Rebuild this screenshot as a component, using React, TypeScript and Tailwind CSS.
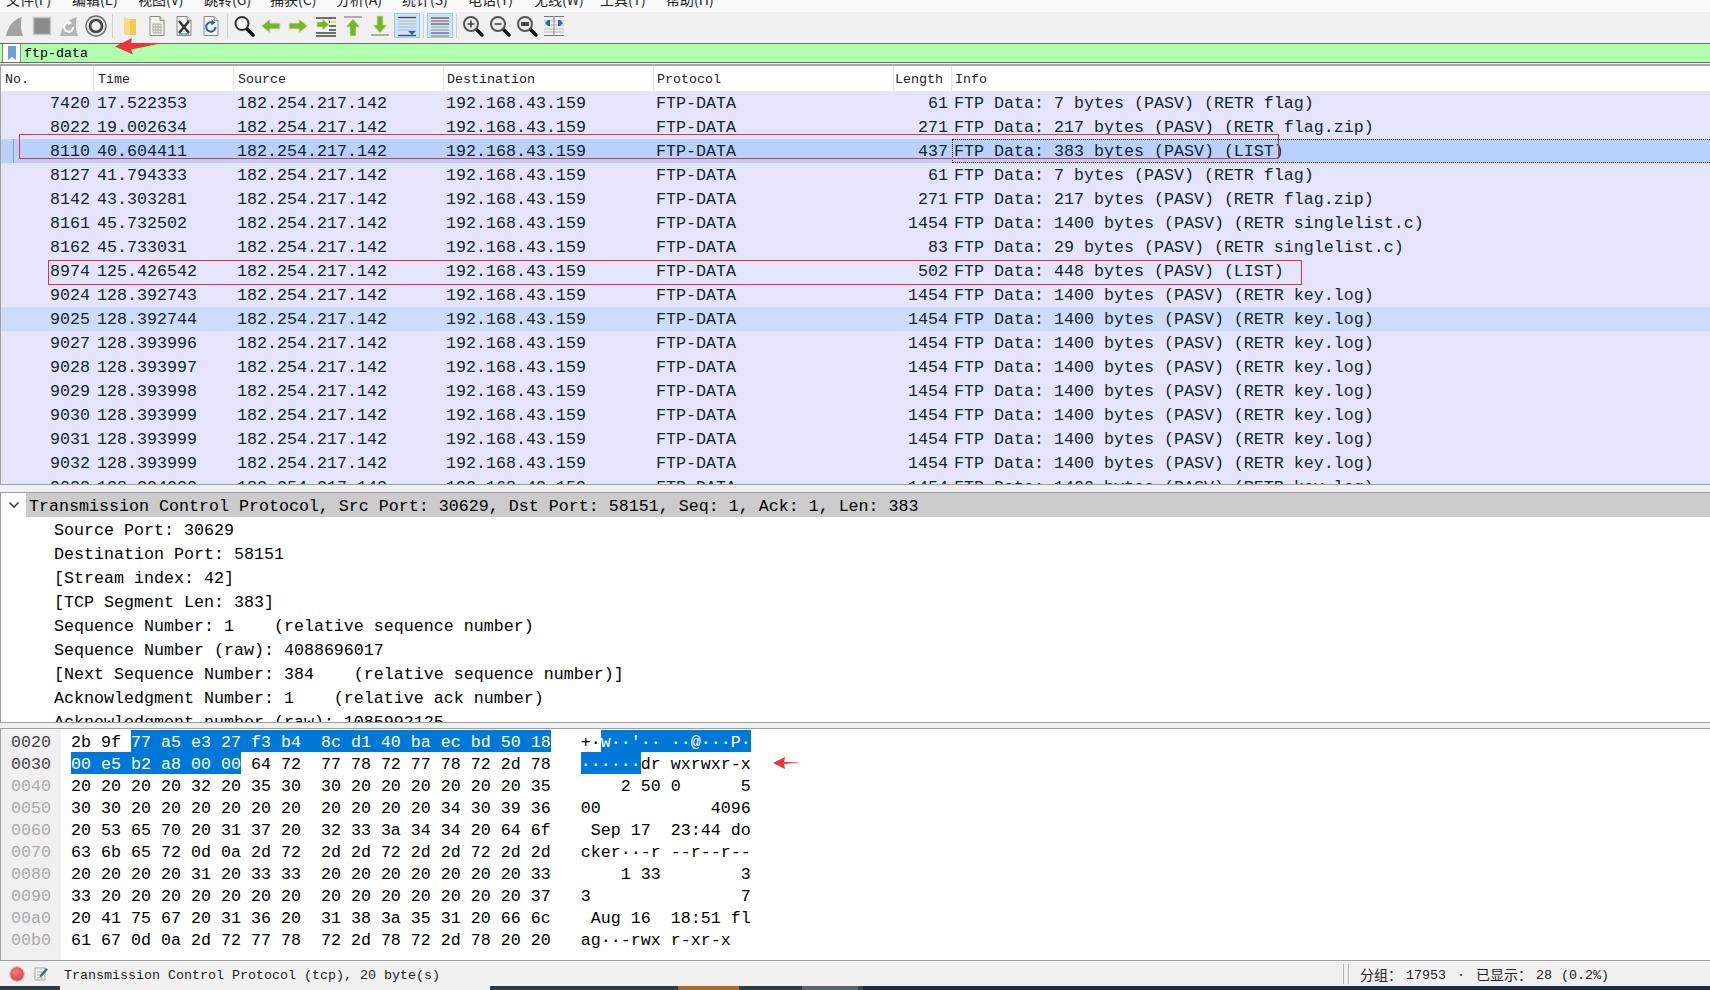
const mono = "font-['Liberation_Mono','Noto_Sans_CJK_SC',monospace]";

const menus = ["文件(F)", "编辑(E)", "视图(V)", "跳转(G)", "捕获(C)", "分析(A)", "统计(S)", "电话(Y)", "无线(W)", "工具(T)", "帮助(H)"];

type Pkt = [string, string, string, string];

const packets: Pkt[] = [
  ["7420", "17.522353", "61", "FTP Data: 7 bytes (PASV) (RETR flag)"],
  ["8022", "19.002634", "271", "FTP Data: 217 bytes (PASV) (RETR flag.zip)"],
  ["8110", "40.604411", "437", "FTP Data: 383 bytes (PASV) (LIST)"],
  ["8127", "41.794333", "61", "FTP Data: 7 bytes (PASV) (RETR flag)"],
  ["8142", "43.303281", "271", "FTP Data: 217 bytes (PASV) (RETR flag.zip)"],
  ["8161", "45.732502", "1454", "FTP Data: 1400 bytes (PASV) (RETR singlelist.c)"],
  ["8162", "45.733031", "83", "FTP Data: 29 bytes (PASV) (RETR singlelist.c)"],
  ["8974", "125.426542", "502", "FTP Data: 448 bytes (PASV) (LIST)"],
  ["9024", "128.392743", "1454", "FTP Data: 1400 bytes (PASV) (RETR key.log)"],
  ["9025", "128.392744", "1454", "FTP Data: 1400 bytes (PASV) (RETR key.log)"],
  ["9027", "128.393996", "1454", "FTP Data: 1400 bytes (PASV) (RETR key.log)"],
  ["9028", "128.393997", "1454", "FTP Data: 1400 bytes (PASV) (RETR key.log)"],
  ["9029", "128.393998", "1454", "FTP Data: 1400 bytes (PASV) (RETR key.log)"],
  ["9030", "128.393999", "1454", "FTP Data: 1400 bytes (PASV) (RETR key.log)"],
  ["9031", "128.393999", "1454", "FTP Data: 1400 bytes (PASV) (RETR key.log)"],
  ["9032", "128.393999", "1454", "FTP Data: 1400 bytes (PASV) (RETR key.log)"],
  ["9033", "128.394000", "1454", "FTP Data: 1400 bytes (PASV) (RETR key.log)"],
];

const details = [
  "Source Port: 30629",
  "Destination Port: 58151",
  "[Stream index: 42]",
  "[TCP Segment Len: 383]",
  "Sequence Number: 1    (relative sequence number)",
  "Sequence Number (raw): 4088696017",
  "[Next Sequence Number: 384    (relative sequence number)]",
  "Acknowledgment Number: 1    (relative ack number)",
  "Acknowledgment number (raw): 1085992125",
];

const hexRows: [string, string][] = [
  ["0020", "2b 9f 77 a5 e3 27 f3 b4 8c d1 40 ba ec bd 50 18"],
  ["0030", "00 e5 b2 a8 00 00 64 72 77 78 72 77 78 72 2d 78"],
  ["0040", "20 20 20 20 32 20 35 30 30 20 20 20 20 20 20 35"],
  ["0050", "30 30 20 20 20 20 20 20 20 20 20 20 34 30 39 36"],
  ["0060", "20 53 65 70 20 31 37 20 32 33 3a 34 34 20 64 6f"],
  ["0070", "63 6b 65 72 0d 0a 2d 72 2d 2d 72 2d 2d 72 2d 2d"],
  ["0080", "20 20 20 20 31 20 33 33 20 20 20 20 20 20 20 33"],
  ["0090", "33 20 20 20 20 20 20 20 20 20 20 20 20 20 20 37"],
  ["00a0", "20 41 75 67 20 31 36 20 31 38 3a 35 31 20 66 6c"],
  ["00b0", "61 67 0d 0a 2d 72 77 78 72 2d 78 72 2d 78 20 20"],
];

const toAscii = (h: string) => {
  const n = parseInt(h, 16);
  return n >= 32 && n < 127 ? String.fromCharCode(n) : "·";
};

const Sel = ({ children }: { children: string }) => (
  <span className="inline-block h-[22px] bg-[#0078d7] align-top text-white">{children}</span>
);

function HexLine({ index, bytes }: { index: number; bytes: string }) {
  const b = bytes.split(" ");
  const a = b.map(toAscii);
  const hex = (x: string[]) => x.join(" ");
  const text = (x: string[]) => x.join("");
  if (index === 0) {
    return (
      <>
        <span>{hex(b.slice(0, 2))} </span>
        <Sel>{hex(b.slice(2, 8)) + "  " + hex(b.slice(8))}</Sel>
        <span>{"   "}</span>
        <span>{text(a.slice(0, 2))}</span>
        <Sel>{text(a.slice(2, 8)) + " " + text(a.slice(8))}</Sel>
      </>
    );
  }
  if (index === 1) {
    return (
      <>
        <Sel>{hex(b.slice(0, 6))}</Sel>
        <span> {hex(b.slice(6, 8))}  {hex(b.slice(8))}{"   "}</span>
        <Sel>{text(a.slice(0, 6))}</Sel>
        <span>{text(a.slice(6, 8))} {text(a.slice(8))}</span>
      </>
    );
  }
  return (
    <span>
      {hex(b.slice(0, 8))}  {hex(b.slice(8))}{"   "}{text(a.slice(0, 8))} {text(a.slice(8))}
    </span>
  );
}

const Svg = ({ children }: { children: React.ReactNode }) => (
  <svg width="24" height="24" viewBox="0 0 24 24">
    {children}
  </svg>
);

const Doc = ({ children }: { children?: React.ReactNode }) => (
  <Svg>
    <path d="M5 2.500h10l4 4v15H5z" fill="#f4f4ee" stroke="#8a8a80" />
    <path d="M15 2.500v4h4" fill="#ddd" stroke="#8a8a80" />
    {children}
  </Svg>
);

const Glass = ({ children }: { children?: React.ReactNode }) => (
  <Svg>
    <path d="M15 15l6 6" stroke="#111" strokeWidth="3.400" strokeLinecap="round" />
    <circle cx="10" cy="10" r="7" fill="#ececec" stroke="#555" strokeWidth="2" />
    {children}
  </Svg>
);

const GREEN = "#78b428";

const icons: React.ReactNode[] = [
  <Svg key="shark">
    <path d="M3 22C5 12 11 5 19 3c-2 6-1 13 1 19z" fill="#a3a3a3" />
  </Svg>,
  <Svg key="stop">
    <rect x="3.500" y="3.500" width="17" height="17" fill="#8b8b8b" stroke="#c8c8c8" strokeWidth="1.500" />
  </Svg>,
  <Svg key="restart">
    <path d="M3 22C5 12 11 5 20 3c-2 6-1 13 1 19z" fill="#b5b5b5" />
    <path d="M16 13a4.500 4.500 0 1 1-3-4" fill="none" stroke="#fff" strokeWidth="2" />
    <path d="M11 6l4 3-4 2.500z" fill="#fff" />
  </Svg>,
  <Svg key="gear">
    <circle cx="12" cy="12" r="10" fill="#e6e6e6" stroke="#6a6a6a" strokeWidth="1.400" />
    <circle cx="12" cy="12" r="6" fill="none" stroke="#444" strokeWidth="2.600" />
    <circle cx="12" cy="12" r="3" fill="#f4f4f4" />
  </Svg>,
  "sep1",
  <Svg key="folder">
    <path d="M6 3l6 2h6v16H8l-2-2z" fill="#fbdc84" />
    <path d="M12 5h6v16h-6z" fill="#f4c95a" />
  </Svg>,
  <Doc key="doc">
    <path d="M8 10h8v9H8z M8 13h8 M8 16h8 M10.700 10v9 M13.300 10v9" fill="none" stroke="#a9a9a9" />
  </Doc>,
  <Doc key="close">
    <path d="M7 7l10 12 M17 7L7 19" stroke="#333" strokeWidth="2.400" />
    <path d="M7 20h10" stroke="#5b8fd0" strokeWidth="1.400" />
  </Doc>,
  <Doc key="reload">
    <path d="M16.500 13a4.700 4.700 0 1 1-2.500-4.200" fill="none" stroke="#2a5fae" strokeWidth="2" />
    <path d="M12.500 5.500l4 3-4 3z" fill="#2a5fae" />
  </Doc>,
  "sep",
  <Svg key="find">
    <path d="M15 15l6 6" stroke="#111" strokeWidth="3.600" strokeLinecap="round" />
    <circle cx="10" cy="9.500" r="6.500" fill="#f6f6f6" stroke="#333" strokeWidth="2" />
  </Svg>,
  <Svg key="back">
    <path d="M2.500 12L11 5v4h10v6H11v4z" fill={GREEN} stroke="#d3e2bb" />
  </Svg>,
  <Svg key="fwd">
    <path d="M21.500 12L13 5v4H3v6h10v4z" fill={GREEN} stroke="#d3e2bb" />
  </Svg>,
  "gap",
  <Svg key="goto">
    <path d="M2 4h20 M2 19h20 M2 22h20 M15 8h7 M15 12h7 M15 16h7" stroke="#444" strokeWidth="1.300" />
    <path d="M16 7h6v2h-6z" fill="#f4dd4c" />
    <path d="M15 10.500L8.500 5v3H3v5h5.500v3z" fill={GREEN} stroke="#d3e2bb" strokeWidth=".7" />
  </Svg>,
  <Svg key="top">
    <path d="M3 3h18" stroke="#a8a8a8" strokeWidth="1.800" />
    <path d="M12 5l7 8h-4v9H9v-9H5z" fill={GREEN} stroke="#d3e2bb" strokeWidth=".7" />
  </Svg>,
  <Svg key="bottom">
    <path d="M3 21h18" stroke="#a8a8a8" strokeWidth="1.800" />
    <path d="M12 19l7-8h-4V2H9v9H5z" fill={GREEN} stroke="#d3e2bb" strokeWidth=".7" />
  </Svg>,
  <div key="scroll" className="flex h-[25px] w-[26px] items-center justify-center border border-[#99c9ef] bg-[#cce4f7]">
    <Svg>
      <path d="M3 3.500h18" stroke="#444" strokeWidth="1.300" />
      <path d="M3 7h18 M3 10h18 M3 13h18 M3 16h18" stroke="#bbb" strokeWidth="1.100" />
      <path d="M3 21.500h18" stroke="#444" strokeWidth="1.300" />
      <path d="M13 17h8l-4 4z" fill="#1d5fa8" />
    </Svg>
  </div>,
  "sep",
  <div key="color" className="flex h-[25px] w-[26px] items-center justify-center border border-[#99c9ef] bg-[#cce4f7]">
    <Svg>
      <path d="M3 4h18" stroke="#555" strokeWidth="1.300" />
      <path d="M3 7h18" stroke="#d9534f" strokeWidth="1.300" />
      <path d="M3 10h18" stroke="#3d66c5" strokeWidth="1.300" />
      <path d="M3 13h18" stroke="#9ec64a" strokeWidth="1.300" />
      <path d="M3 16h18" stroke="#c28bc9" strokeWidth="1.300" />
      <path d="M3 19h18" stroke="#3d66c5" strokeWidth="1.300" />
      <path d="M3 22h18" stroke="#b8902f" strokeWidth="1.300" />
    </Svg>
  </div>,
  "sep",
  <Glass key="zin">
    <path d="M6.500 10h7 M10 6.500v7" stroke="#444" strokeWidth="1.600" />
  </Glass>,
  <Glass key="zout">
    <path d="M6.500 10h7" stroke="#444" strokeWidth="1.600" />
  </Glass>,
  <Glass key="zreset">
    <rect x="6" y="8" width="8" height="4" fill="#444" />
  </Glass>,
  <Svg key="resize">
    <path d="M2 7h20 M2 11h20 M2 15h20 M2 18h20" stroke="#bbb" strokeWidth="1" />
    <path d="M2 2.500h20 M2 21.500h20" stroke="#777" strokeWidth="1" />
    <path d="M12 2v20" stroke="#999" strokeWidth="1.200" />
    <path d="M6 6v6l-3-3z M18 6v6l3-3z M6 6h2v6H6z M16 6h2v6h-2z" fill="#2a6ab5" />
  </Svg>,
];

function Toolbar() {
  return (
    <div className="flex h-[31px] items-center bg-[#f0f0f0] pb-[4px] pl-[1px]">
      {icons.map((ic, i) => {
        if (ic === "sep") return <div key={i} className="mx-[2.500px] h-[24px] w-px bg-[#d0d0d0]" />;
        if (ic === "sep1") return <div key={i} className="mx-[3px] h-[24px] w-px bg-[#d0d0d0]" />;
        if (ic === "gap") return <div key={i} className="w-[1px]" />;
        return (
          <div key={i} className="flex w-[27px] items-center justify-center">
            {ic}
          </div>
        );
      })}
    </div>
  );
}

const cols = "grid grid-cols-[93px_140px_210px_210px_240px_58px_1fr]";

function PacketRow({ p, i }: { p: Pkt; i: number }) {
  const selected = i === 2;
  const soft = i === 9;
  const bg = selected ? "bg-[#b8d1fd]" : soft ? "bg-[#cddcfb]" : "bg-[#e4e4fd]";
  return (
    <div className={`${cols} relative h-[24px] shrink-0 leading-[26px] whitespace-pre ${bg}`}>
      {selected && <div className="absolute top-0 left-[12px] h-full w-px bg-[#8f9aa8]" />}
      <div className="h-[24px] pr-[4px] text-right">{p[0]}</div>
      <div className="h-[24px] pl-[3px]">{p[1]}</div>
      <div className="h-[24px] pl-[3px]">182.254.217.142</div>
      <div className="h-[24px] pl-[2px]">192.168.43.159</div>
      <div className="h-[24px] pl-[2px]">FTP-DATA</div>
      <div className="h-[24px] pr-[4px] text-right">{p[2]}</div>
      <div className={selected ? "h-[24px] border-y border-l border-dotted border-black pl-[1px] leading-[24px]" : "h-[24px] pl-[2px]"}>{p[3]}</div>
    </div>
  );
}

function PacketList() {
  return (
    <div className={`flex h-[419px] flex-col overflow-hidden border-b border-l border-[#a0a0a0] ${mono} text-[16.67px] text-[#12272e]`}>
      <div className={`${cols} h-[25px] shrink-0 bg-white text-[13.33px] leading-[27px] text-[#222]`}>
        <div className="h-[25px] border-r border-[#e6e6e6] pl-[4px]">No.</div>
        <div className="h-[25px] border-r border-[#e6e6e6] pl-[4px]">Time</div>
        <div className="h-[25px] border-r border-[#e6e6e6] pl-[4px]">Source</div>
        <div className="h-[25px] border-r border-[#e6e6e6] pl-[3px]">Destination</div>
        <div className="h-[25px] border-r border-[#e6e6e6] pl-[3px]">Protocol</div>
        <div className="h-[25px] border-r border-[#e6e6e6] pl-[1px]">Length</div>
        <div className="h-[25px] pl-[3px]">Info</div>
      </div>
      {packets.map((p, i) => (
        <PacketRow key={p[0]} p={p} i={i} />
      ))}
    </div>
  );
}

function DetailPane() {
  return (
    <div className={`h-[231px] overflow-hidden border-y border-l border-[#a0a0a0] bg-white ${mono} text-[16.67px] leading-[28px] whitespace-pre text-black`}>
      <div className="flex h-[24px]">
        <div className="flex w-[25px] items-center justify-center">
          <svg width="12" height="12" viewBox="0 0 12 12">
            <path d="M1.500 3.500L6 8l4.500-4.500" fill="none" stroke="#444" strokeWidth="1.600" />
          </svg>
        </div>
        <div className="flex-1 bg-[#cbcbcb] pl-[3px]">
          Transmission Control Protocol, Src Port: 30629, Dst Port: 58151, Seq: 1, Ack: 1, Len: 383
        </div>
      </div>
      {details.map((d) => (
        <div key={d} className="h-[24px] pl-[53px]">
          {d}
        </div>
      ))}
    </div>
  );
}

function HexPane() {
  return (
    <div className={`flex h-[233px] border-y border-l border-[#a0a0a0] bg-white ${mono} text-[16.67px] leading-[26px] whitespace-pre text-black`}>
      <div className="w-[60px] bg-[#f0f0f0] pt-[1px] pl-[10px]">
        {hexRows.map(([off], i) => (
          <div key={off} className={i < 2 ? "h-[22px] text-[#444]" : "h-[22px] text-[#aaa]"}>
            {off}
          </div>
        ))}
      </div>
      <div className="pt-[1px] pl-[10px]">
        {hexRows.map(([off, bytes], i) => (
          <div key={off} className="h-[22px]">
            <HexLine index={i} bytes={bytes} />
          </div>
        ))}
      </div>
    </div>
  );
}

function StatusBar() {
  return (
    <div className={`flex h-[25px] items-center bg-[#f0f0f0] pt-[1px] ${mono} text-[13.33px] text-[#222] whitespace-pre`}>
      <div className="ml-[10px] h-[14px] w-[14px] rounded-full bg-[radial-gradient(circle_at_40%_35%,#f47a7a,#d8303a)] outline outline-[#c9c9c9]" />
      <div className="ml-[6px] flex w-[22px] justify-center">
        <svg width="16" height="16" viewBox="0 0 16 16">
          <path d="M2 2h10v12H2z" fill="#f4f4e8" stroke="#a8a89a" />
          <path d="M4 6h6 M4 9h6 M4 12h6" stroke="#b0b0b0" />
          <path d="M7 9l6-7 2 1.500-6 7-2.500 1z" fill="#3a6ea5" />
        </svg>
      </div>
      <span className="mt-[4px] ml-[12px]">Transmission Control Protocol (tcp), 20 byte(s)</span>
      <div className="ml-auto flex h-[20px] w-[367px] items-center">
        <div className="h-full w-[6px] border-x border-[#b5b5b5]" />
        <span className="mt-[4px] ml-[11px] text-[14px]">分组：</span>
        <span className="mt-[4px] ml-[4px]">17953</span>
        <span className="mt-[4px] ml-[11px]">·</span>
        <span className="mt-[4px] ml-[11px] text-[14px]">已显示：</span>
        <span className="mt-[4px] ml-[4px]">28</span>
        <span className="mt-[4px] ml-[9px]">(0.2%)</span>
      </div>
    </div>
  );
}

function Taskbar() {
  return (
    <div className="flex h-[4px] bg-[#2a3c46]">
      <div className="w-[60px]" />
      <div className="w-[430px] bg-[#f0f0f0]" />
      <div className="w-[188px]" />
      <div className="w-[61px] bg-[#ad6a2f]" />
      <div className="w-[63px]" />
      <div className="w-[56px] bg-[#566570]" />
      <div className="w-[5px] bg-[#3d4650]" />
      <div className="flex-1 bg-[#1c2e42]" />
    </div>
  );
}

export default function App() {
  return (
    <div className="relative h-[990px] w-[1710px] overflow-hidden bg-[#f0f0f0]">
      <div className="h-[12px] overflow-hidden bg-[#f9f9f9]">
        <div className="-mt-[11px] flex pl-[6px] font-['Noto_Sans_CJK_SC',sans-serif] text-[14px] leading-[20px] text-[#222]">
          {menus.map((m) => (
            <div key={m} className="w-[66px]">
              {m}
            </div>
          ))}
        </div>
      </div>
      <Toolbar />
      <div className={`mb-[1px] flex h-[20px] items-center border-y border-[#6a6a6a] bg-[#afffaf] ${mono} text-[13.33px] text-black`}>
        <div className="ml-[2px] flex h-[18px] w-[19px] items-center justify-center border-x border-[#8a8a8a] bg-white">
          <svg width="10" height="14" viewBox="0 0 10 14">
            <path d="M1 0h8v14L5 11l-4 3z" fill="#6f9fd8" />
          </svg>
        </div>
        <span className="mt-[2px] ml-[3px]">ftp-data</span>
      </div>
      <div className="h-[2px] bg-[#a8a8a8]" />
      <PacketList />
      <div className="h-[7px]" />
      <DetailPane />
      <div className="h-[5px]" />
      <HexPane />
      <StatusBar />
      <Taskbar />

      {/* annotations drawn on top of the capture */}
      <div className="absolute top-[134px] left-[19px] h-[25px] w-[1260px] border border-[#e8323c]" />
      <div className="absolute top-[260px] left-[48px] h-[25px] w-[1254px] border border-[#e8323c]" />
      <svg className="absolute top-[36px] left-[112px]" width="54" height="20" viewBox="0 0 54 20">
        <path d="M3 10.500L20 2l-1 5 32 0-32 6.500 2 5z" fill="#f0323c" />
      </svg>
      <svg className="absolute top-[756px] left-[771px]" width="32" height="14" viewBox="0 0 32 14">
        <path d="M2 7l12-6-1 5 17 0.500-17 1.500 1 5z" fill="#f0323c" />
      </svg>
    </div>
  );
}
